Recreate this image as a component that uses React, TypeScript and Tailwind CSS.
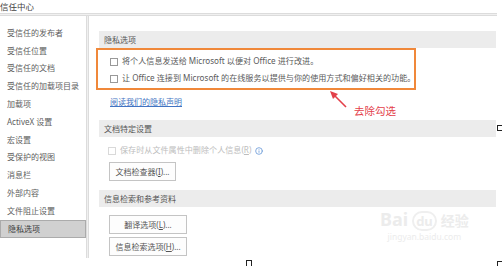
import { Info } from "lucide-react";

const navItems = [
  "受信任的发布者",
  "受信任位置",
  "受信任的文档",
  "受信任的加载项目录",
  "加载项",
  "ActiveX 设置",
  "宏设置",
  "受保护的视图",
  "消息栏",
  "外部内容",
  "文件阻止设置",
  "隐私选项",
];

function SectionHeader({ title }: { title: string }) {
  return (
    <div className="ml-[3px] flex h-[17px] w-[397px] items-center bg-[#ececec] pl-[5px] text-[8px] text-[#555]">
      {title}
    </div>
  );
}

function CheckRow({ children, disabled = false }: { children: React.ReactNode; disabled?: boolean }) {
  return (
    <div className={`flex h-[17px] items-center gap-[4px] pl-[12px] text-[8.1px] ${disabled ? "text-[#bdbdbd]" : "text-[#5a5a5a]"}`}>
      <span className={`h-[8px] w-[8px] shrink-0 border bg-white ${disabled ? "border-[#d9d9d9]" : "border-[#999]"}`} />
      <span className="whitespace-nowrap">{children}</span>
    </div>
  );
}

function Button({ label, width }: { label: React.ReactNode; width: string }) {
  return (
    <div className={`ml-[13px] flex h-[19px] ${width} items-center justify-center border border-[#c4c4c4] bg-[#fdfdfd] text-[8px] text-[#555]`}>
      {label}
    </div>
  );
}

export default function App() {
  return (
    <div className="relative h-[266px] w-[502px] overflow-hidden bg-white font-['Noto_Sans','Noto_Sans_CJK_SC',sans-serif] text-[#5a5a5a]">
      <div className="h-[13px] text-[8.5px] leading-[13px] text-[#444]">信任中心</div>
      <div className="h-[3px] w-[497px] border-y border-[#dcdcdc] bg-[#f0f0f0]" />

      <div className="flex">
        <nav className="w-[86px] pt-[8px]">
          {navItems.map((item, i) => (
            <div
              key={item}
              className={`flex h-[17.8px] items-center pl-[7px] text-[8px] ${
                i === navItems.length - 1 ? "border border-[#ababab] bg-[#d0d0d0] pl-[6px] text-[#3a3a3a]" : "text-[#606060]"
              }`}
            >
              {item}
            </div>
          ))}
        </nav>

        <div className="h-[242px] w-[3px] border-x border-[#dcdcdc] bg-[#f0f0f0]" />

        <main className="flex w-[400px] flex-col pl-[7px]">
          <div className="mt-[15px]">
            <SectionHeader title="隐私选项" />
          </div>

          <div className="w-[320px] border-2 border-[#f0883a] pb-[1px] pt-[3px]">
            <CheckRow>将个人信息发送给 Microsoft 以便对 Office 进行改进。</CheckRow>
            <CheckRow>让 Office 连接到 Microsoft 的在线服务以提供与你的使用方式和偏好相关的功能。</CheckRow>
          </div>

          <div className="mt-[5px] flex h-[14px] items-center pl-[14px] text-[8px] text-[#4273c2] underline">
            阅读我们的隐私声明
          </div>

          <div className="mt-[11px]">
            <SectionHeader title="文档特定设置" />
          </div>

          <div className="mt-[5px] flex items-center">
            <CheckRow disabled>
              保存时从文件属性中删除个人信息(<span className="underline">R</span>)
            </CheckRow>
            <Info className="ml-[4px] h-[8px] w-[8px] text-[#6b9ad9]" strokeWidth={2.5} />
          </div>

          <div className="mt-[3px]">
            <Button width="w-[67px]" label={<>文档检查器(<span className="underline">I</span>)...</>} />
          </div>

          <div className="mt-[9px]">
            <SectionHeader title="信息检索和参考资料" />
          </div>

          <div className="mt-[8px]">
            <Button width="w-[78px]" label={<>翻译选项(<span className="underline">L</span>)...</>} />
          </div>
          <div className="mt-[3px]">
            <Button width="w-[78px]" label={<>信息检索选项(<span className="underline">H</span>)...</>} />
          </div>
        </main>
      </div>

      {/* annotation */}
      <svg className="absolute left-[326px] top-[88px]" width="24" height="24" viewBox="0 0 24 24">
        <line x1="20" y1="19" x2="7" y2="6" stroke="#e3404a" strokeWidth="1.6" />
        <polygon points="4,3 12,6 7,11" fill="#e3404a" />
      </svg>
      <div className="absolute left-[354px] top-[104px] text-[10.5px] leading-[14px] text-[#e3404a]">去除勾选</div>

      {/* watermark */}
      <div className="pointer-events-none absolute left-[380px] top-[208px] flex flex-col items-center text-[#ececec]">
        <div className="flex items-baseline gap-[4px]">
          <span className="text-[18px] font-bold leading-[22px]">Bai</span>
          <span className="rounded-full border-2 border-[#efefef] px-[2px] text-[13px] font-bold leading-[16px]">du</span>
          <span className="text-[14px] font-bold leading-[18px]">经验</span>
        </div>
        <span className="text-[8.5px] leading-[12px]">jingyan.baidu.com</span>
      </div>

      {/* crop handles */}
      <div className="absolute left-[497px] top-[125px] h-[6px] w-[7px] border border-[#222]" />
      <div className="absolute left-[246px] top-[260px] h-[7px] w-[6px] border border-[#222]" />
      <div className="absolute left-[497px] top-[261px] h-[7px] w-[7px] border border-[#222]" />
    </div>
  );
}
